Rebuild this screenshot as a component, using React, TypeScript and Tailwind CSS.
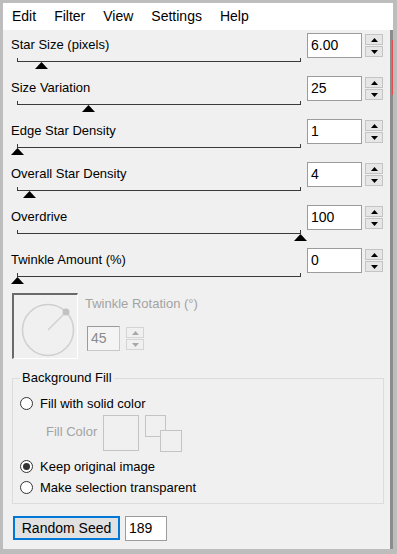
import React from 'react';

const sliders = [
  { label: 'Star Size (pixels)', value: '6.00', thumb: 24 },
  { label: 'Size Variation', value: '25', thumb: 71 },
  { label: 'Edge Star Density', value: '1', thumb: 0 },
  { label: 'Overall Star Density', value: '4', thumb: 12 },
  { label: 'Overdrive', value: '100', thumb: 283 },
  { label: 'Twinkle Amount (%)', value: '0', thumb: 0 },
];

function Spinner({ disabled = false }: { disabled?: boolean }) {
  const arrow = disabled ? 'text-[#a8a8a8]' : 'text-black';
  const box = disabled ? 'border-[#d4d4d4] bg-[#f0f0f0]' : 'border-[#c4c4c4] bg-[#e6e6e6]';
  return (
    <div className="flex flex-col gap-[1px] w-[18px] h-[23px] mt-[1px]">
      <div className={`flex-1 border ${box} flex items-center justify-center`}>
        <svg width="7" height="4" viewBox="0 0 7 4" className={arrow}>
          <path d="M0 4 L3.5 0 L7 4 Z" fill="currentColor" />
        </svg>
      </div>
      <div className={`flex-1 border ${box} flex items-center justify-center`}>
        <svg width="7" height="4" viewBox="0 0 7 4" className={arrow}>
          <path d="M0 0 L7 0 L3.5 4 Z" fill="currentColor" />
        </svg>
      </div>
    </div>
  );
}

function SliderRow({ label, value, thumb }: { label: string; value: string; thumb: number }) {
  return (
    <div className="flex h-[43px]">
      <div className="w-[290px] flex flex-col">
        <div className="mt-[4px] h-[16px] leading-[16px] text-[13px] text-black">{label}</div>
        {/* track with end ticks */}
        <div className="relative ml-[6px] w-[284px] mt-[8px] h-[1px] bg-[#3a3a3a]">
          <div className="absolute left-0 -top-[3px] w-[1px] h-[4px] bg-[#3a3a3a]" />
          <div className="absolute right-0 -top-[3px] w-[1px] h-[4px] bg-[#3a3a3a]" />
          <svg
            width="13"
            height="7"
            viewBox="0 0 13 7"
            className="absolute top-[1px]"
            style={{ left: thumb - 6 }}
          >
            <path d="M0 7 L6.5 0 L13 7 Z" fill="#000" />
          </svg>
        </div>
      </div>
      <div className="ml-[6px] w-[55px] h-[25px] border border-[#9c9c9c] bg-white px-[3px] text-[14px] leading-[23px] text-black">
        {value}
      </div>
      <div className="ml-[3px]">
        <Spinner />
      </div>
    </div>
  );
}

function Radio({ checked = false, label }: { checked?: boolean; label: string }) {
  return (
    <div className="flex items-center h-[17px] text-[13px] text-black">
      <div className="w-[13px] h-[13px] rounded-full border border-[#333] bg-white flex items-center justify-center">
        {checked && <div className="w-[7px] h-[7px] rounded-full bg-[#333]" />}
      </div>
      <span className="ml-[7px]">{label}</span>
    </div>
  );
}

export default function App() {
  return (
    <div
      className="w-[397px] h-[554px] bg-[#bdbdbd] pt-[3px] pl-[3px] pr-[4px] pb-[5px]"
      style={{ fontFamily: '"Liberation Sans", Arial, sans-serif' }}
    >
      <div className="h-full bg-[#f0f0f0] flex flex-col">
        {/* Menu bar */}
        <div className="h-[27px] bg-white flex items-center pl-[9px] gap-[18px] text-[14px] text-black">
          <span>Edit</span>
          <span>Filter</span>
          <span>View</span>
          <span>Settings</span>
          <span>Help</span>
        </div>

        <div className="flex-1 flex">
          <div className="w-[387px] pt-[3px] pl-[8px] flex flex-col">
            {sliders.map((s) => (
              <SliderRow key={s.label} {...s} />
            ))}

            {/* Twinkle rotation */}
            <div className="flex mt-[2px]">
              <div className="ml-[1px] w-[66px] h-[66px] border-t-2 border-l-2 border-[#6a6a6a] border-r border-b border-r-white border-b-white flex items-center justify-center">
                <svg width="60" height="60" viewBox="0 0 60 60">
                  <circle cx="32" cy="33" r="25.5" fill="none" stroke="#cfcfcf" strokeWidth="1.5" />
                  <line x1="32" y1="33" x2="50" y2="15" stroke="#cfcfcf" strokeWidth="1.5" />
                  <circle cx="50" cy="15" r="3.5" fill="#c2c2c2" />
                </svg>
              </div>
              <div className="ml-[7px] flex flex-col">
                <div className="mt-[3px] h-[16px] leading-[16px] text-[13px] text-[#a3a3a3]">
                  Twinkle Rotation (°)
                </div>
                <div className="mt-[14px] ml-[2px] flex">
                  <div className="w-[33px] h-[25px] border border-[#c8c8c8] border-t-[#9a9a9a] border-l-[#9a9a9a] bg-[#f4f4f4] px-[3px] text-[14px] leading-[23px] text-[#8a8a8a]">
                    45
                  </div>
                  <div className="ml-[6px]">
                    <Spinner disabled />
                  </div>
                </div>
              </div>
            </div>

            {/* Background fill group */}
            <fieldset className="mt-[11px] ml-[1px] w-[372px] border border-[#dcdcdc] pl-[7px] pb-[7px]">
              <legend className="px-[2px] text-[13px] leading-[16px] text-black">Background Fill</legend>
              <div className="mt-[9px]">
                <Radio label="Fill with solid color" />
              </div>
              <div className="flex items-start mt-[3px] ml-[26px]">
                <span className="mt-[9px] text-[13px] leading-[16px] text-[#a3a3a3]">Fill Color</span>
                <div className="ml-[6px] w-[36px] h-[36px] border border-[#c4c4c4]" />
                <div className="relative ml-[6px] w-[37px] h-[37px]">
                  <div className="absolute left-0 top-0 w-[21px] h-[22px] border border-[#c4c4c4] bg-[#f0f0f0]" />
                  <div className="absolute left-[15px] top-[15px] w-[22px] h-[22px] border border-[#c4c4c4] bg-[#f0f0f0]" />
                </div>
              </div>
              <div className="mt-[6px]">
                <Radio checked label="Keep original image" />
              </div>
              <div className="mt-[4px]">
                <Radio label="Make selection transparent" />
              </div>
            </fieldset>

            {/* Random seed */}
            <div className="flex mt-[12px] ml-[2px]">
              <button className="w-[107px] h-[24px] border-2 border-[#0078d7] bg-[#e1e1e1] text-[14px] text-black leading-[20px]">
                Random Seed
              </button>
              <div className="ml-[5px] w-[42px] h-[25px] border border-[#9c9c9c] bg-white px-[3px] text-[14px] leading-[23px] text-black">
                189
              </div>
            </div>
          </div>

          {/* right edge bar */}
          <div className="w-[3px] flex flex-col">
            <div className="h-[10px] bg-[#8c8c8c]" />
            <div className="h-[55px] bg-[#8c8c8c] border-r border-r-[#e84c4c]" />
            <div className="flex-1 bg-[#8c8c8c]" />
          </div>
        </div>
      </div>
    </div>
  );
}
